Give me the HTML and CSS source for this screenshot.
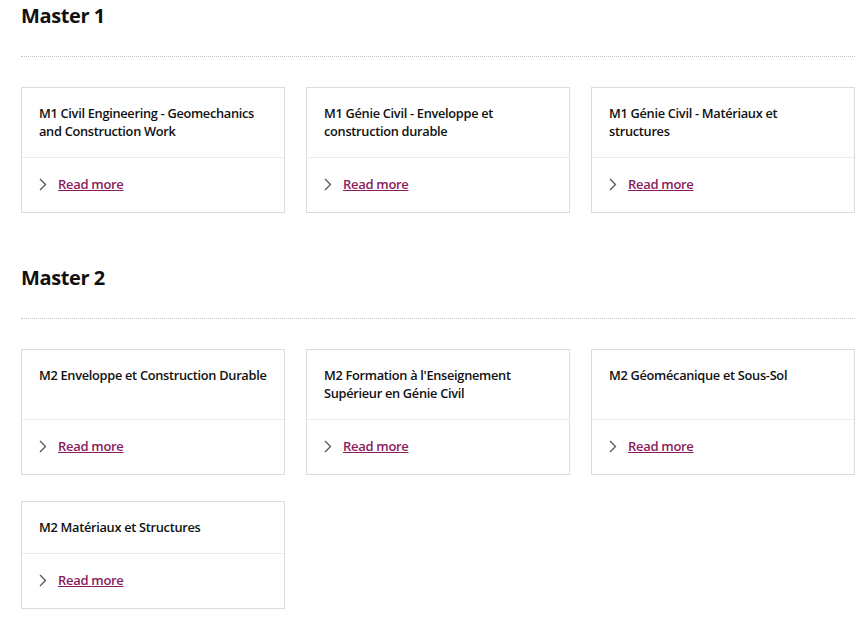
FILE: index.html
```html
<!DOCTYPE html>
<html lang="fr">
<head>
  <meta charset="UTF-8">
  <meta name="viewport" content="width=device-width, initial-scale=1.0">
  <title>Masters - Génie Civil</title>
  <link rel="stylesheet" href="styles.css">
</head>
<body>
  <div class="page">
    <section class="level">
      <h2>Master 1</h2>
      <div class="cards">
        <div class="card">
          <div class="card-title">M1 Civil Engineering - Geomechanics and Construction Work</div>
          <div class="card-foot">
            <svg class="chev" width="8" height="13" viewBox="0 0 8 13"><polyline points="1,1 6.5,6.5 1,12"/></svg>
            <a href="#">Read more</a>
          </div>
        </div>
        <div class="card">
          <div class="card-title">M1 Génie Civil - Enveloppe et construction durable</div>
          <div class="card-foot">
            <svg class="chev" width="8" height="13" viewBox="0 0 8 13"><polyline points="1,1 6.5,6.5 1,12"/></svg>
            <a href="#">Read more</a>
          </div>
        </div>
        <div class="card">
          <div class="card-title">M1 Génie Civil - Matériaux et structures</div>
          <div class="card-foot">
            <svg class="chev" width="8" height="13" viewBox="0 0 8 13"><polyline points="1,1 6.5,6.5 1,12"/></svg>
            <a href="#">Read more</a>
          </div>
        </div>
      </div>
    </section>

    <section class="level">
      <h2>Master 2</h2>
      <div class="cards">
        <div class="card">
          <div class="card-title">M2 Enveloppe et Construction Durable</div>
          <div class="card-foot">
            <svg class="chev" width="8" height="13" viewBox="0 0 8 13"><polyline points="1,1 6.5,6.5 1,12"/></svg>
            <a href="#">Read more</a>
          </div>
        </div>
        <div class="card">
          <div class="card-title">M2 Formation à l'Enseignement Supérieur en Génie Civil</div>
          <div class="card-foot">
            <svg class="chev" width="8" height="13" viewBox="0 0 8 13"><polyline points="1,1 6.5,6.5 1,12"/></svg>
            <a href="#">Read more</a>
          </div>
        </div>
        <div class="card">
          <div class="card-title">M2 Géomécanique et Sous-Sol</div>
          <div class="card-foot">
            <svg class="chev" width="8" height="13" viewBox="0 0 8 13"><polyline points="1,1 6.5,6.5 1,12"/></svg>
            <a href="#">Read more</a>
          </div>
        </div>
        <div class="card">
          <div class="card-title">M2 Matériaux et Structures</div>
          <div class="card-foot">
            <svg class="chev" width="8" height="13" viewBox="0 0 8 13"><polyline points="1,1 6.5,6.5 1,12"/></svg>
            <a href="#">Read more</a>
          </div>
        </div>
      </div>
    </section>
  </div>
</body>
</html>
```

FILE: styles.css
```css
:root {
  --link: #8a1c5c;
  --line: #dcdcdc;
}
body {
  margin: 0;
  font-family: "Open Sans", sans-serif;
  color: #111;
  background: #fff;
}
.page {
  padding: 2px 10px 0 21px;
}
.level {
  margin-bottom: 51px;
}
.level h2 {
  margin: 0;
  font-size: 20px;
  line-height: 28px;
  font-weight: 700;
  letter-spacing: -0.4px;
  padding-bottom: 26px;
  border-bottom: 1px dotted #c4c4c4;
}
.cards {
  margin-top: 30px;
  display: grid;
  grid-template-columns: repeat(3, 1fr);
  column-gap: 21px;
  row-gap: 26px;
}
.card {
  display: flex;
  flex-direction: column;
  border: 1px solid var(--line);
}
.card-title {
  flex: 1;
  padding: 16px 16px 17px 17px;
  font-size: 12.8px;
  line-height: 18px;
  font-weight: 600;
  letter-spacing: -0.3px;
  border-bottom: 1px solid #ececec;
}
.card-foot {
  display: flex;
  align-items: center;
  gap: 11px;
  padding: 17px 17px 19px;
  font-size: 13px;
  line-height: 18px;
}
.chev {
  fill: none;
  stroke: #555;
  stroke-width: 1.3;
}
.card-foot a {
  color: var(--link);
  font-weight: 600;
  letter-spacing: -0.3px;
  text-decoration: underline;
}
```
